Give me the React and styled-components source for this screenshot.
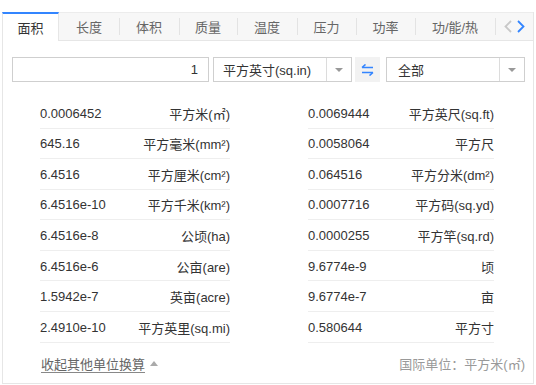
import React from "react";
import styled, { createGlobalStyle } from "styled-components";

const Global = createGlobalStyle`
  html, body { margin: 0; padding: 0; background: #fff; }
  body { font-family: "Liberation Sans", Arial, "Noto Sans CJK SC", sans-serif; color: #333; }
`;

const Panel = styled.div`
  margin: 12px 0 0 2px;
  width: 532px;
  height: 372px;
  box-sizing: border-box;
  border: 1px solid #e6e6e6;
  border-top: none;
  display: flex;
  flex-direction: column;
`;

const TabBar = styled.div`
  display: flex;
  align-items: stretch;
  height: 29px;
  box-sizing: border-box;
  background: #f7f7f7;
  border-bottom: 1px solid #e6e6e6;
  border-top: 1px solid #ececec;
  margin-left: -1px;
`;

const Tab = styled.div`
  position: relative;
  width: ${(p) => p.$w}px;
  flex: none;
  display: flex;
  align-items: center;
  justify-content: center;
  font-size: 13px;
  color: ${(p) => (p.$active ? "#333" : "#666")};
  box-sizing: border-box;
  ${(p) =>
    p.$active
      ? `background:#fff; border-top:2px solid #3385ff; margin-top:-1px; margin-bottom:-1px; border-left:1px solid #e6e6e6; border-right:1px solid #e6e6e6; padding-bottom:1px;`
      : `&::before{content:"";position:absolute;left:0;top:5px;bottom:5px;width:1px;background:#e3e3e3;}`}
  ${(p) => (p.$first ? `&::before{display:none;}` : "")}
`;

const Arrows = styled.div`
  position: relative;
  flex: 1;
  display: flex;
  align-items: center;
  padding-left: 9px;
  gap: 5px;
  &::before {
    content: "";
    position: absolute;
    left: 0;
    top: 5px;
    bottom: 5px;
    width: 1px;
    background: #e3e3e3;
  }
`;

const Body = styled.div`
  flex: 1;
  display: flex;
  flex-direction: column;
  padding: 16px 8px 0 9px;
`;

const Controls = styled.div`
  display: flex;
  align-items: center;
  height: 25px;
`;

const NumInput = styled.div`
  width: 197px;
  height: 25px;
  box-sizing: border-box;
  border: 1px solid #cfcfcf;
  display: flex;
  align-items: center;
  justify-content: flex-end;
  padding-right: 10px;
  font-size: 13px;
  color: #333;
`;

const Select = styled.div`
  width: ${(p) => p.$w}px;
  height: 25px;
  margin-left: ${(p) => p.$ml}px;
  box-sizing: border-box;
  border: 1px solid #cfcfcf;
  display: flex;
  align-items: stretch;
  font-size: 13px;
  color: #333;
`;

const SelectText = styled.div`
  flex: 1;
  display: flex;
  align-items: center;
  padding-left: ${(p) => p.$pl}px;
`;

const Caret = styled.div`
  width: 24px;
  border-left: 1px solid #dcdcdc;
  display: flex;
  align-items: center;
  justify-content: center;
`;

const Swap = styled.div`
  width: 25px;
  height: 25px;
  margin-left: 3px;
  background: #f2f2f2;
  display: flex;
  align-items: center;
  justify-content: center;
`;

const List = styled.div`
  display: grid;
  grid-template-columns: 190px 186px;
  column-gap: 78px;
  padding-left: 28px;
  margin-top: 16px;
`;

const Column = styled.div`
  display: flex;
  flex-direction: column;
`;

const Row = styled.div`
  height: 30.57px;
  box-sizing: border-box;
  border-bottom: 1px solid #eeeeee;
  display: flex;
  align-items: center;
  justify-content: space-between;
  font-size: 13px;
  color: #333;
  padding-top: 1px;
`;

const Footer = styled.div`
  flex: 1;
  display: flex;
  align-items: center;
  justify-content: space-between;
  padding-left: 29px;
  padding-top: 2px;
  font-size: 13px;
`;

const Collapse = styled.span`
  color: #666;
  text-decoration: underline;
  text-underline-offset: 3px;
  text-decoration-color: #888;
  display: flex;
  align-items: center;
`;

const Tri = styled.span`
  display: inline-block;
  margin-left: 5px;
  width: 0;
  height: 0;
  border-left: 4px solid transparent;
  border-right: 4px solid transparent;
  border-bottom: 5px solid #aaa;
`;

const SI = styled.span`
  color: #999;
`;

const tabs = [
  ["面积", 57],
  ["长度", 60],
  ["体积", 60],
  ["质量", 58],
  ["温度", 60],
  ["压力", 59],
  ["功率", 59],
  ["功/能/热", 80],
];

const left = [
  ["0.0006452", "平方米(㎡)"],
  ["645.16", "平方毫米(mm²)"],
  ["6.4516", "平方厘米(cm²)"],
  ["6.4516e-10", "平方千米(km²)"],
  ["6.4516e-8", "公顷(ha)"],
  ["6.4516e-6", "公亩(are)"],
  ["1.5942e-7", "英亩(acre)"],
  ["2.4910e-10", "平方英里(sq.mi)"],
];
const right = [
  ["0.0069444", "平方英尺(sq.ft)"],
  ["0.0058064", "平方尺"],
  ["0.064516", "平方分米(dm²)"],
  ["0.0007716", "平方码(sq.yd)"],
  ["0.0000255", "平方竿(sq.rd)"],
  ["9.6774e-9", "顷"],
  ["9.6774e-7", "亩"],
  ["0.580644", "平方寸"],
];

const CaretIcon = () => (
  <svg width="8" height="4" viewBox="0 0 8 4">
    <path d="M0 0 L8 0 L4 4 Z" fill="#999" />
  </svg>
);

export default function App() {
  return (
    <>
      <Global />
      <Panel>
        <TabBar>
          {tabs.map(([t, w], i) => (
            <Tab key={t} $w={w} $active={i === 0} $first={i === 1}>
              {t}
            </Tab>
          ))}
          <Arrows>
            <svg width="8" height="13" viewBox="0 0 8 13">
              <path d="M7 1 L1.5 6.5 L7 12" fill="none" stroke="#c8c8c8" strokeWidth="1.8" />
            </svg>
            <svg width="8" height="13" viewBox="0 0 8 13">
              <path d="M1 1 L6.5 6.5 L1 12" fill="none" stroke="#3385ff" strokeWidth="1.8" />
            </svg>
          </Arrows>
        </TabBar>
        <Body>
          <Controls>
            <NumInput>1</NumInput>
            <Select $w={139} $ml={4}>
              <SelectText $pl={9}>平方英寸(sq.in)</SelectText>
              <Caret>
                <CaretIcon />
              </Caret>
            </Select>
            <Swap>
              <svg width="13" height="12" viewBox="0 0 13 12">
                <path d="M1 3.5 H12 M4.5 0.5 L1 3.5 M1 8.5 H12 M8.5 11.5 L12 8.5" fill="none" stroke="#3385ff" strokeWidth="1.6" />
              </svg>
            </Swap>
            <Select $w={139} $ml={6}>
              <SelectText $pl={11}>全部</SelectText>
              <Caret>
                <CaretIcon />
              </Caret>
            </Select>
          </Controls>
          <List>
            <Column>
              {left.map(([v, u]) => (
                <Row key={u}>
                  <span>{v}</span>
                  <span>{u}</span>
                </Row>
              ))}
            </Column>
            <Column>
              {right.map(([v, u]) => (
                <Row key={u}>
                  <span>{v}</span>
                  <span>{u}</span>
                </Row>
              ))}
            </Column>
          </List>
          <Footer>
            <Collapse>
              收起其他单位换算
              <Tri />
            </Collapse>
            <SI>国际单位：平方米(㎡)</SI>
          </Footer>
        </Body>
      </Panel>
    </>
  );
}
